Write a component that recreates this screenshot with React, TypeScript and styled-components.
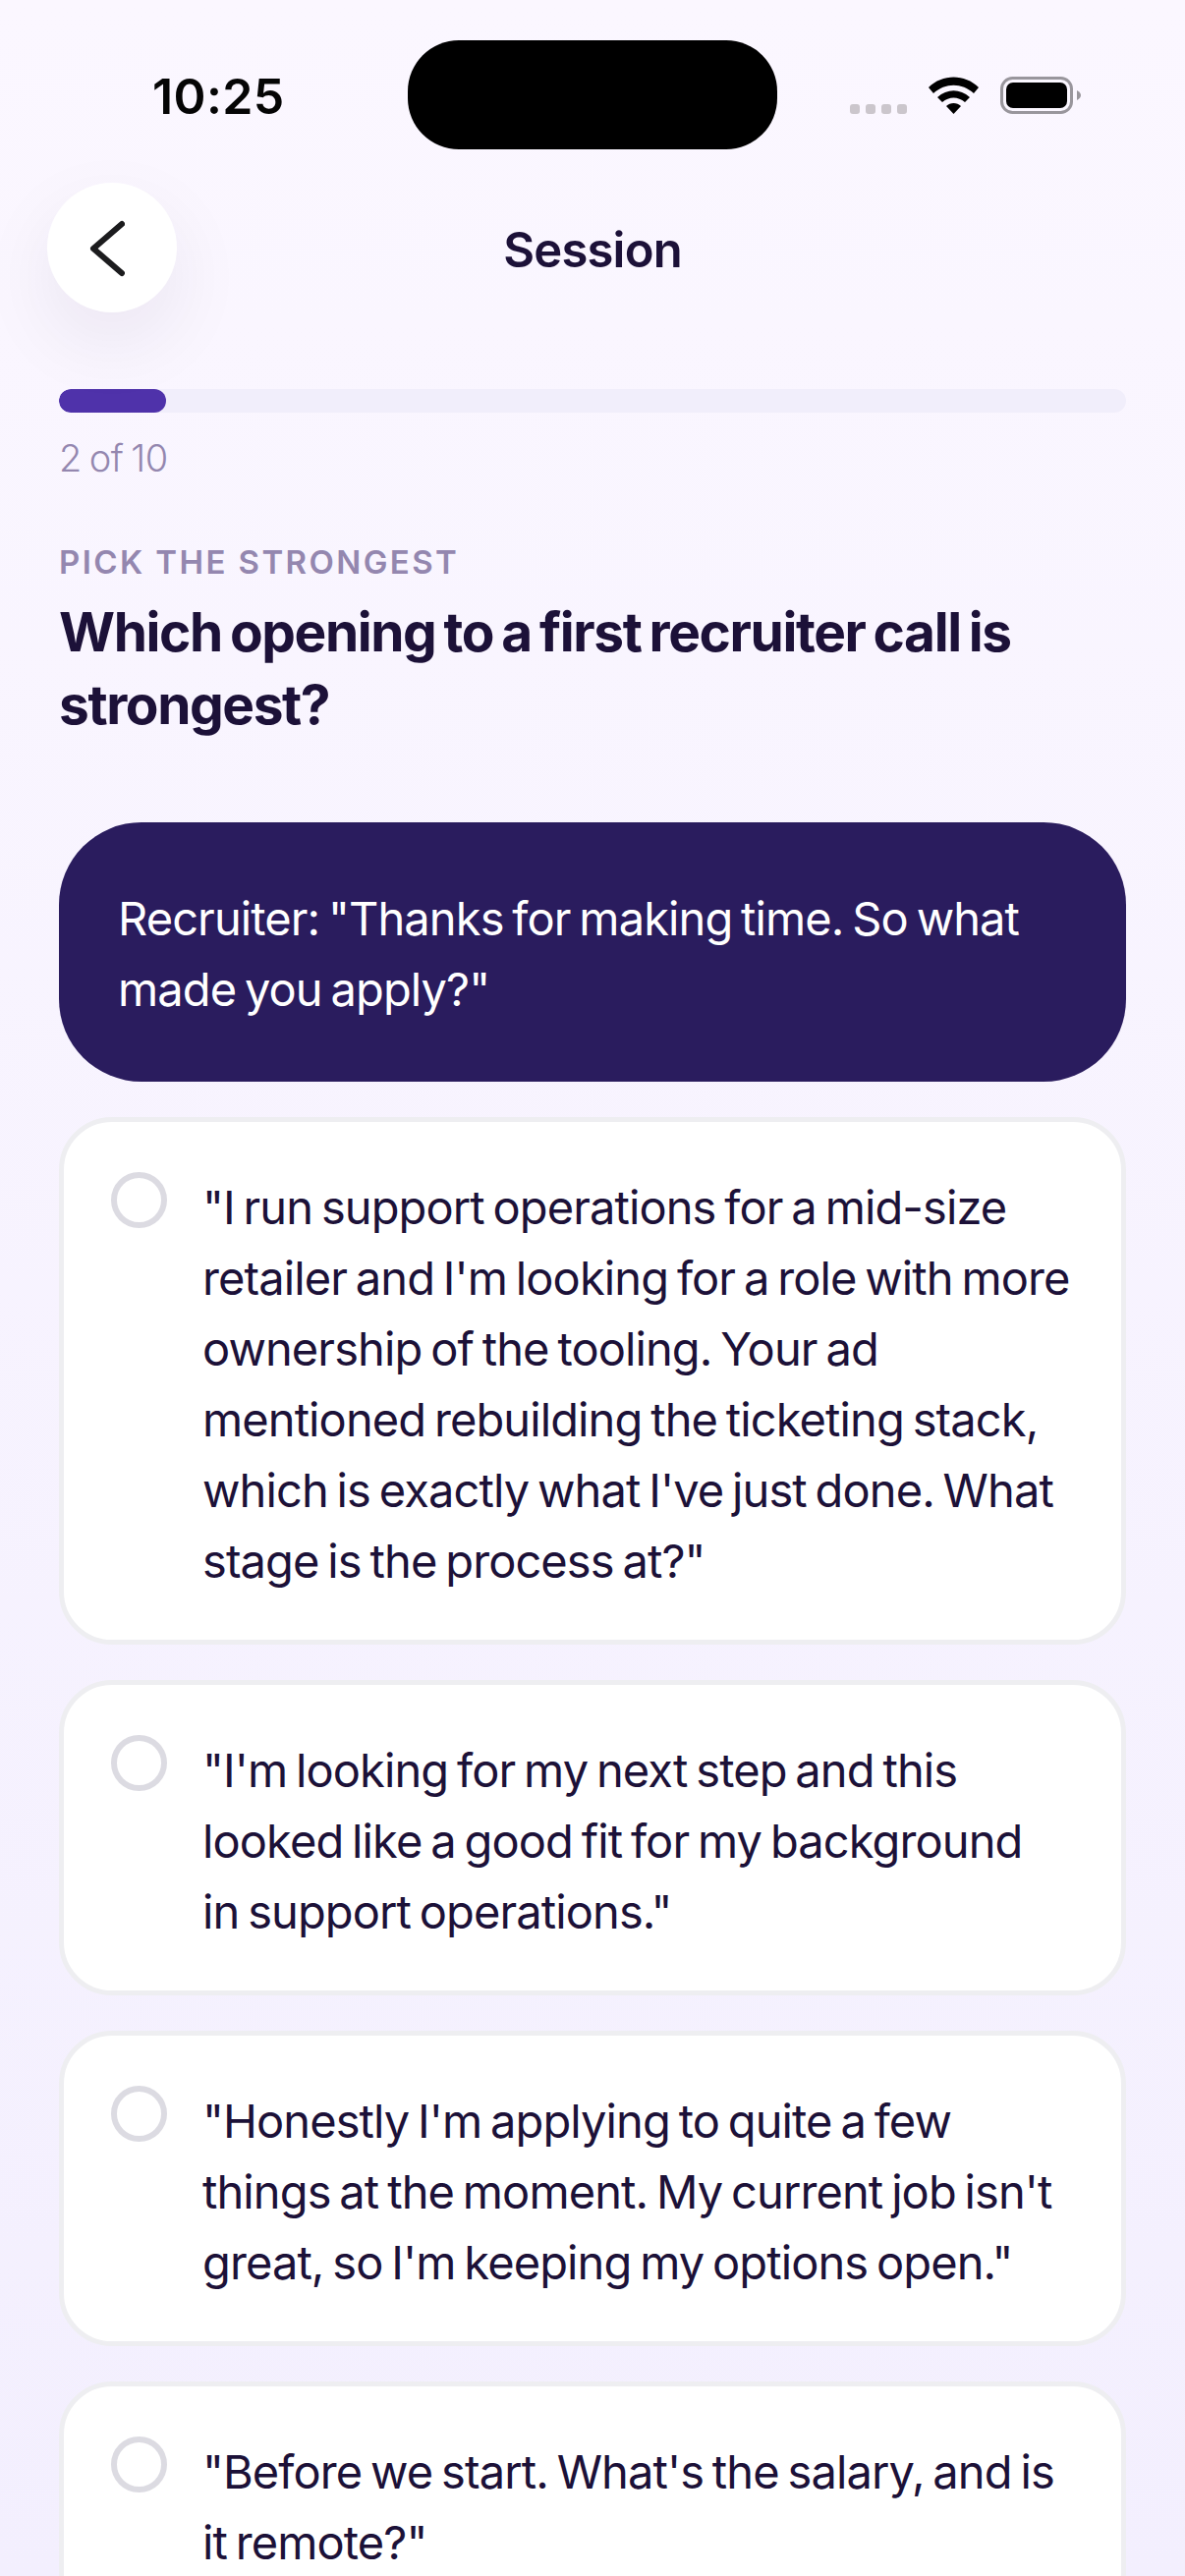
import React from 'react';
import styled, { createGlobalStyle } from 'styled-components';

const GlobalStyle = createGlobalStyle`
  html, body {
    margin: 0;
    padding: 0;
    background: #fbf7ff;
  }
  * {
    box-sizing: border-box;
  }
`;

const Screen = styled.div`
  width: 1206px;
  height: 2622px;
  overflow: hidden;
  font-family: Inter, "Noto Sans", sans-serif;
  color: #1c1138;
  background: linear-gradient(180deg, #fbf7ff 0%, #f3effe 100%);
`;

const StatusBar = styled.div`
  display: grid;
  grid-template-columns: 415px 376px 1fr;
  align-items: center;
  padding-top: 41px;
  height: 186px;
  align-content: start;
`;

const Time = styled.div`
  padding: 3px 0 0 155px;
  font-size: 50px;
  font-weight: 600;
  letter-spacing: 0.4px;
  line-height: 108px;
  color: #050505;
`;

const Island = styled.div`
  height: 111px;
  border-radius: 52px;
  background: #000;
`;

const StatusIcons = styled.div`
  display: flex;
  align-items: center;
  padding-left: 74px;
  height: 111px;
`;

const Dots = styled.div`
  display: flex;
  gap: 6px;
  margin: 28px 22px 0 0;
`;

const Dot = styled.span`
  width: 10px;
  height: 10px;
  border-radius: 3px;
  background: #cbc6cc;
`;

const Battery = styled.svg`
  margin-left: 22px;
`;

const Header = styled.header`
  display: grid;
  grid-template-columns: 132px 1fr 132px;
  align-items: center;
  padding: 0 48px;
`;

const BackButton = styled.button`
  width: 132px;
  height: 132px;
  padding: 0;
  border: 0;
  border-radius: 50%;
  background: #fff;
  box-shadow: 0 30px 80px rgba(28, 17, 56, 0.07);
  display: flex;
  align-items: center;
  justify-content: center;
`;

const BackIcon = styled.svg`
  margin: 2px 0 0 -10px;
`;

const HeaderTitle = styled.h1`
  margin: 5px 0 0;
  text-align: center;
  font-size: 49px;
  font-weight: 600;
  letter-spacing: -0.8px;
  line-height: 60px;
`;

const Content = styled.main`
  padding: 78px 60px 0;
`;

const Track = styled.div`
  height: 24px;
  border-radius: 12px;
  background: #f1eefb;
  overflow: hidden;
`;

const Fill = styled.div`
  height: 100%;
  border-radius: 12px;
  background: #4f32aa;
`;

const ProgressLabel = styled.div`
  margin-top: 24px;
  font-size: 38px;
  font-weight: 300;
  line-height: 44px;
  letter-spacing: -0.6px;
  word-spacing: -2px;
  color: #9487af;
`;

const Eyebrow = styled.div`
  margin-top: 63px;
  font-size: 33px;
  font-weight: 600;
  line-height: 42px;
  letter-spacing: 2.4px;
  color: #9487af;
`;

const Question = styled.h2`
  margin: 13px 0 0;
  font-size: 55px;
  font-weight: 700;
  line-height: 74px;
  letter-spacing: -1.4px;
  word-spacing: -3.5px;
`;

const Bubble = styled.div`
  margin-top: 83px;
  padding: 62px 60px 0;
  height: 264px;
  border-radius: 84px;
  background: #2a1c5e;
  color: #fff;
  font-size: 47px;
  line-height: 72px;
  letter-spacing: -0.9px;
  word-spacing: -3.5px;
`;

const Options = styled.div`
  display: flex;
  flex-direction: column;
  gap: 36px;
  margin-top: 36px;
`;

const OptionCard = styled.div`
  display: flex;
  align-items: flex-start;
  gap: 36px;
  padding: 47.5px 48px;
  background: #fff;
  border: 5px solid #eeeef1;
  border-radius: 54px;
`;

const Radio = styled.span`
  flex: none;
  width: 57px;
  height: 57px;
  margin-top: 3px;
  border: 6px solid #dcdbe2;
  border-radius: 50%;
`;

const OptionText = styled.div`
  margin: 3px 0 -3px;
  font-size: 47px;
  line-height: 72px;
  letter-spacing: -0.9px;
  word-spacing: -3.5px;
  color: #1c1138;
`;

const options = [
  `"I run support operations for a mid-size retailer and I'm looking for a role with more ownership of the tooling. Your ad mentioned rebuilding the ticketing stack, which is exactly what I've just done. What stage is the process at?"`,
  `"I'm looking for my next step and this looked like a good fit for my background in\u00a0support operations."`,
  `"Honestly I'm applying to quite a few things at the moment. My current job isn't great, so I'm keeping my options open."`,
  `"Before we start. What's the salary, and is it remote?"`,
];

export default function App() {
  return (
    <Screen>
      <GlobalStyle />
      <StatusBar>
        <Time>10:25</Time>
        <Island />
        <StatusIcons>
          <Dots>
            <Dot />
            <Dot />
            <Dot />
            <Dot />
          </Dots>
          <svg width="51" height="38" viewBox="0 0 51 38">
            <path d="M0 11 C14 -3 37 -3 51 11 L46 17 C34 6 17 6 5 17 Z" fill="#000" />
            <path d="M9 21 C19 12 32 12 42 21 L37 26 C30 20 21 20 14 26 Z" fill="#000" />
            <path d="M18 30 C22 26 29 26 33 30 L25.5 38 Z" fill="#000" />
          </svg>
          <Battery width="82" height="38" viewBox="0 0 82 38">
            <rect x="1.5" y="1.5" width="71" height="35" rx="11" fill="none" stroke="#99969c" strokeWidth="3" />
            <rect x="6" y="6" width="62" height="26" rx="7" fill="#000" />
            <path d="M78 14 C81 16 82 17 82 19 C82 21 81 22 78 24 Z" fill="#99969c" />
          </Battery>
        </StatusIcons>
      </StatusBar>
      <Header>
        <BackButton aria-label="Back">
          <BackIcon width="36" height="58" viewBox="0 0 36 58" fill="none">
            <path d="M33 4 L4 29 L33 54" stroke="#1c1c1e" strokeWidth="6" strokeLinecap="round" strokeLinejoin="round" />
          </BackIcon>
        </BackButton>
        <HeaderTitle>Session</HeaderTitle>
        <span />
      </Header>
      <Content>
        <Track>
          <Fill style={{ width: `${(1 / 10) * 100}%` }} />
        </Track>
        <ProgressLabel>2 of 10</ProgressLabel>
        <Eyebrow>PICK THE STRONGEST</Eyebrow>
        <Question>Which opening to a first recruiter call is strongest?</Question>
        <Bubble>Recruiter: "Thanks for making time. So what made you apply?"</Bubble>
        <Options>
          {options.map((text) => (
            <OptionCard key={text}>
              <Radio />
              <OptionText>{text}</OptionText>
            </OptionCard>
          ))}
        </Options>
      </Content>
    </Screen>
  );
}
